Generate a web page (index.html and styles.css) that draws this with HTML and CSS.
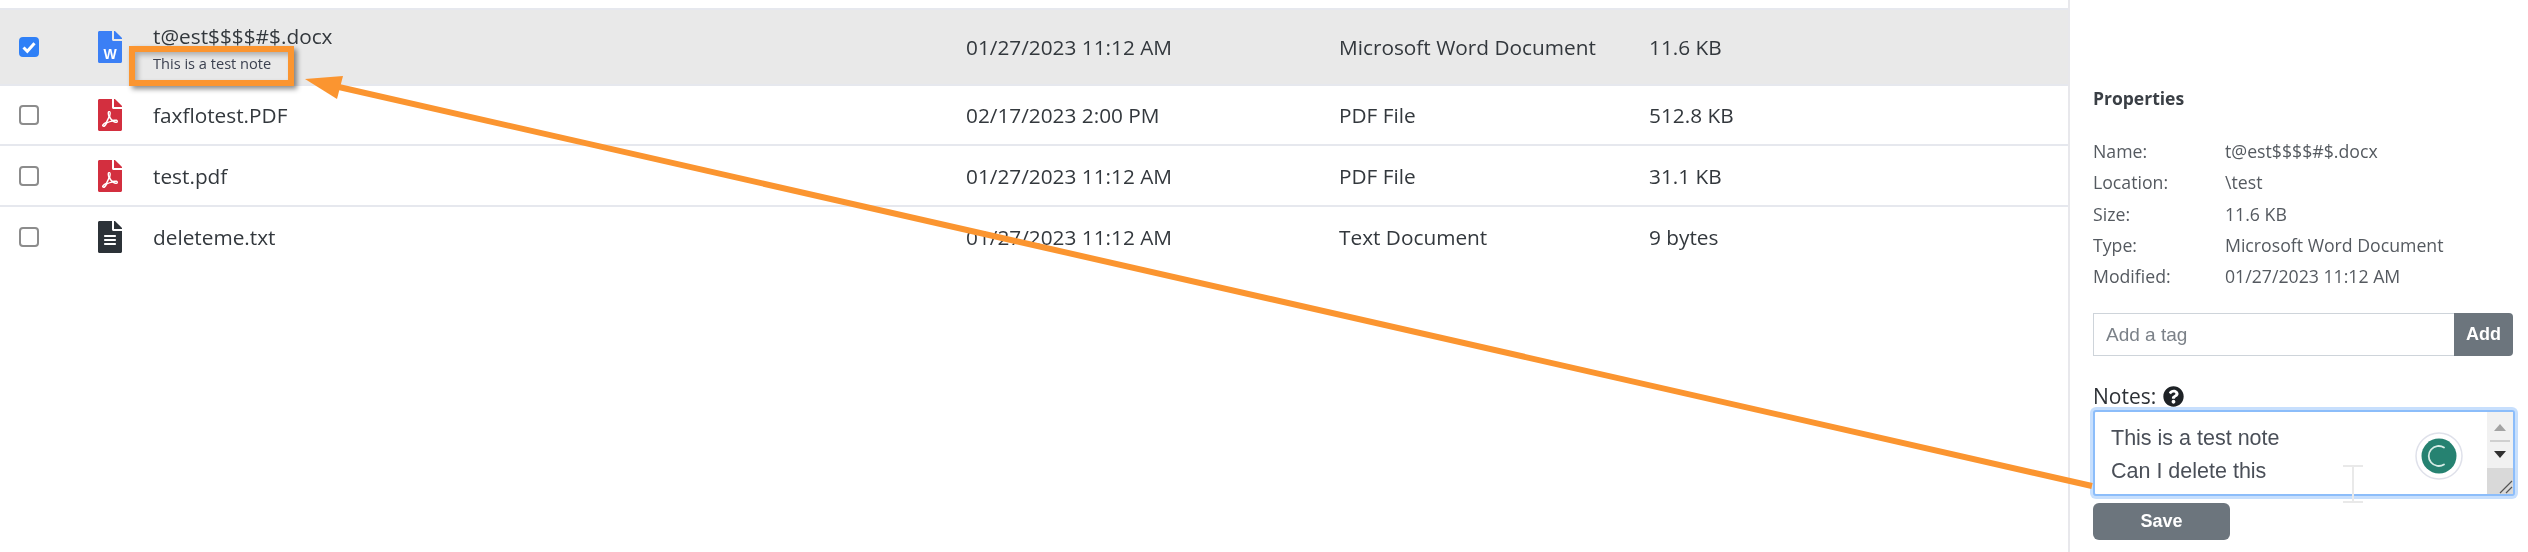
FILE: index.html
```html
<!DOCTYPE html>
<html lang="en">
<head>
<meta charset="utf-8">
<title>Files</title>
<link rel="stylesheet" href="styles.css">
</head>
<body>
<svg width="0" height="0" class="defs">
  <symbol id="pdf" viewBox="0 0 384 512"><path d="M181.9 256.1c-5-16-4.9-46.9-2-46.9 8.4 0 7.6 36.9 2 46.9zm-1.7 47.2c-7.7 20.2-17.3 43.3-28.4 62.7 18.3-7 39-17.2 62.9-21.9-12.7-9.6-24.9-23.4-34.5-40.8zM86.1 428.1c0 .8 13.2-5.4 34.9-40.2-6.7 6.3-29.1 24.5-34.9 40.2zM248 160h136v328c0 13.3-10.7 24-24 24H24c-13.3 0-24-10.7-24-24V24C0 10.7 10.7 0 24 0h200v136c0 13.2 10.8 24 24 24zm-8 171.8c-20-12.2-33.3-29-42.7-53.8 4.5-18.5 11.6-46.6 6.2-64.2-4.7-29.4-42.4-26.5-47.8-6.8-5 18.3-.4 44.1 8.1 77-11.6 27.6-28.7 64.6-40.8 85.8-.1 0-.1.1-.2.1-27.1 13.9-73.6 44.5-54.5 68 5.6 6.9 16 10 21.5 10 17.9 0 35.7-18 61.1-61.8 25.8-8.5 54.1-19.1 79-23.2 21.7 11.8 47.1 19.5 64 19.5 29.2 0 31.2-32 19.7-43.4-13.9-13.6-54.3-9.7-73.6-7.2zM377 105L279 7c-4.5-4.5-10.6-7-17-7h-6v128h128v-6.1c0-6.3-2.5-12.4-7-16.9zm-74.1 255.3c4.1-2.7-2.5-11.9-42.8-9 37.1 15.8 42.8 9 42.8 9z"/></symbol>
  <symbol id="txt" viewBox="0 0 384 512"><path d="M224 136V0H24C10.700 0 0 10.700 0 24v464c0 13.300 10.700 24 24 24h336c13.300 0 24-10.700 24-24V160H248c-13.200 0-24-10.800-24-24zm64 236c0 6.600-5.400 12-12 12H108c-6.600 0-12-5.400-12-12v-8c0-6.600 5.400-12 12-12h168c6.600 0 12 5.400 12 12v8zm0-64c0 6.600-5.400 12-12 12H108c-6.600 0-12-5.400-12-12v-8c0-6.600 5.400-12 12-12h168c6.600 0 12 5.400 12 12v8zm0-72v8c0 6.600-5.400 12-12 12H108c-6.600 0-12-5.400-12-12v-8c0-6.600 5.400-12 12-12h168c6.600 0 12 5.400 12 12zm96-114.100v6.100H256V0h6.100c6.400 0 12.500 2.500 17 7l97.900 98c4.500 4.500 7 10.600 7 16.900z"/></symbol>
  <symbol id="doc" viewBox="0 0 384 512"><path d="M224 136V0H24C10.700 0 0 10.700 0 24v464c0 13.300 10.700 24 24 24h336c13.300 0 24-10.700 24-24V160H248c-13.200 0-24-10.800-24-24zM384 121.900v6.100H256V0h6.100c6.400 0 12.500 2.500 17 7l97.900 98c4.500 4.500 7 10.600 7 16.900z"/></symbol>
</svg>

<div class="page">
  <main class="list">
    <div class="row row-selected">
      <span class="check check-on"><svg viewBox="0 0 20 20"><path d="M4.500 10.500l3.800 3.800 7.200-8" fill="none" stroke="#fff" stroke-width="3"/></svg></span>
      <span class="ficon ficon-doc"><svg><use href="#doc"/></svg><b class="w">W</b></span>
      <div class="name"><div>t@est$$$$#$.docx</div><div class="note">This is a test note</div></div>
      <div>01/27/2023 11:12 AM</div>
      <div>Microsoft Word Document</div>
      <div>11.6 KB</div>
    </div>
    <div class="row row-2">
      <span class="check"></span>
      <span class="ficon ficon-pdf"><svg><use href="#pdf"/></svg></span>
      <div class="name">faxflotest.PDF</div>
      <div>02/17/2023 2:00 PM</div>
      <div>PDF File</div>
      <div>512.8 KB</div>
    </div>
    <div class="row row-3">
      <span class="check"></span>
      <span class="ficon ficon-pdf"><svg><use href="#pdf"/></svg></span>
      <div class="name">test.pdf</div>
      <div>01/27/2023 11:12 AM</div>
      <div>PDF File</div>
      <div>31.1 KB</div>
    </div>
    <div class="row row-4">
      <span class="check"></span>
      <span class="ficon ficon-txt"><svg><use href="#txt"/></svg></span>
      <div class="name">deleteme.txt</div>
      <div>01/27/2023 11:12 AM</div>
      <div>Text Document</div>
      <div>9 bytes</div>
    </div>
  </main>

  <aside class="panel">
    <h2 class="title">Properties</h2>
    <dl class="props">
      <dt>Name:</dt><dd>t@est$$$$#$.docx</dd>
      <dt>Location:</dt><dd>\test</dd>
      <dt>Size:</dt><dd>11.6 KB</dd>
      <dt>Type:</dt><dd>Microsoft Word Document</dd>
      <dt>Modified:</dt><dd>01/27/2023 11:12 AM</dd>
    </dl>
    <div class="tag">
      <div class="tag-input">Add a tag</div>
      <div class="tag-btn">Add</div>
    </div>
    <div class="notes-label">Notes:
      <svg class="help" viewBox="0 0 512 512"><path d="M504 256c0 137-111 248-248 248S8 393 8 256 119 8 256 8s248 111 248 248zM262.700 90c-54.500 0-89.300 23-116.500 63.800-3.500 5.300-2.400 12.400 2.700 16.300l34.700 26.300c5.200 3.900 12.600 3 16.700-2.100 17.900-22.700 30.100-35.800 57.300-35.800 20.400 0 45.700 13.100 45.700 33 0 15-12.400 22.700-32.600 34-23.600 13.200-54.800 29.700-54.800 70.900V300c0 6.600 5.400 12 12 12h56c6.600 0 12-5.400 12-12v-1.300c0-28.500 83.400-29.700 83.400-106.900 0-58.200-60.300-101.800-116.600-101.800zM256 338c-25.400 0-46 20.600-46 46 0 25.400 20.600 46 46 46s46-20.600 46-46c0-25.400-20.600-46-46-46z"/></svg>
    </div>
    <div class="notes">
      <div class="notes-text">This is a test note<br>Can I delete this</div>
      <div class="scroll">
        <div class="scroll-track">
          <span class="arrow-up"></span>
          <span class="scroll-line"></span>
          <span class="arrow-down"></span>
        </div>
        <div class="scroll-thumb">
          <svg class="grip" viewBox="0 0 14 14"><path d="M1 13L13 1M7 13l6-6" stroke="#555" stroke-width="1.200" fill="none"/></svg>
        </div>
      </div>
      <span class="grammarly"><svg viewBox="0 0 48 48"><circle cx="24" cy="24" r="23" fill="#fff" stroke="#dfe1ea" stroke-width="1.500"/><circle cx="24" cy="24" r="17.500" fill="#268271"/><path d="M29 15.500a10 10 0 1 0 0 17" fill="none" stroke="#d7ece6" stroke-width="1.800" stroke-linecap="round"/></svg></span>
    </div>
    <div class="save">Save</div>
  </aside>
</div>

<svg class="ibeam" width="22" height="38" viewBox="0 0 22 38"><path d="M1 1h20M11 1v36M1 37h20" stroke="#e9e9e9" stroke-width="2" fill="none"/></svg>
<div class="callout"></div>
<svg class="arrow" width="2528" height="552" viewBox="0 0 2528 552">
  <path d="M2092 486L330 85" stroke="#fb9530" stroke-width="6" fill="none"/>
  <path d="M305 79L343 76L337 99Z" fill="#fb9530"/>
</svg>
</body>
</html>
```
FILE: styles.css
```css
html, body { margin: 0; padding: 0; background: #fff; }
body {
  width: 2528px;
  height: 552px;
  overflow: hidden;
  position: relative;
  font-family: "Open Sans", "Noto Sans", "Liberation Sans", sans-serif;
  color: #33383d;
}
.defs { position: absolute; }
.page { display: flex; height: 552px; filter: blur(0.4px); }

.list { width: 2068px; padding-top: 8px; box-sizing: border-box; flex: none; }
.row {
  display: grid;
  grid-template-columns: 79px 55px 813px 373px 310px 1fr;
  align-items: center;
  border-bottom: 2px solid #e6e8ee;
  box-sizing: border-box;
  font-size: 20.800px;
  padding-left: 19px;
}
.row-selected { height: 78px; background: #e9e9e9; border-top: 2px solid #e6e8ee; }
.row-2 { height: 60px; }
.row-3 { height: 61px; }
.row-4 { height: 60px; border-bottom: 0; }
.check {
  width: 20px;
  height: 20px;
  box-sizing: border-box;
  border: 2px solid #8c8c8c;
  border-radius: 4px;
  background: #fff;
  display: block;
}
.check-on { background: #2f80f7; border-color: #2f80f7; }
.check-on svg { display: block; width: 20px; height: 20px; margin: -2px; }
.ficon { position: relative; width: 24px; height: 32px; display: block; }
.ficon svg { width: 24px; height: 32px; display: block; }
.ficon-doc { fill: #3b7ff5; }
.ficon-pdf { fill: #d32f3f; }
.ficon-txt { fill: #2c3238; }
.w {
  position: absolute;
  left: 3px;
  top: 15px;
  width: 18px;
  text-align: center;
  font: 700 14px/16px "Liberation Sans", sans-serif;
  color: #fff;
}
.note {
  font-size: 14.600px;
  line-height: 18px;
  margin-top: 5px;
  color: #3c4150;
}
.name { line-height: 26px; }

.panel {
  flex: 1;
  border-left: 2px solid #e8e8ec;
  padding: 87px 14px 0 23px;
  box-sizing: border-box;
  min-width: 0;
}
.title {
  margin: 0;
  font-size: 17.500px;
  line-height: 22px;
  font-weight: 700;
  color: #3a3f45;
}
.props {
  display: grid;
  grid-template-columns: 132px 1fr;
  margin: 27px 0 0;
  font-size: 17.700px;
  line-height: 31.300px;
  color: #555a60;
}
.props dt, .props dd { margin: 0; }
.tag { display: flex; height: 43px; margin-top: 21px; width: 420px; }
.tag-input {
  flex: 1;
  border: 1px solid #ced4da;
  border-right: 0;
  padding-left: 12px;
  font: 400 19px/41px "Liberation Sans", Arial, sans-serif;
  color: #7b8188;
}
.tag-btn {
  width: 59px;
  background: #6c757d;
  color: #fff;
  font: 700 18px/43px "Liberation Sans", Arial, sans-serif;
  text-align: center;
  border-radius: 0 4px 4px 0;
}
.notes-label {
  margin-top: 28px;
  font-size: 21px;
  line-height: 24px;
  color: #2d3136;
  display: flex;
  align-items: center;
  gap: 7px;
}
.help { width: 21px; height: 21px; fill: #1e2226; }
.notes {
  position: relative;
  margin-top: 2px;
  width: 422px;
  height: 86px;
  box-sizing: border-box;
  border: 2px solid #8cbdfa;
  border-radius: 3px;
  box-shadow: 0 0 0 3px #c7dffd;
  background: #fff;
  display: flex;
  justify-content: space-between;
}
.notes-text {
  padding: 10px 0 0 16px;
  font: 400 21.500px/33px "Liberation Sans", Arial, sans-serif;
  color: #4a4f58;
}
.scroll { width: 26px; height: 100%; display: flex; flex-direction: column; background: #f1f1f1; }
.scroll-track {
  height: 56px;
  flex: none;
  display: flex;
  flex-direction: column;
  align-items: center;
  gap: 9px;
  padding-top: 12px;
  box-sizing: border-box;
}
.arrow-up { border: 6px solid transparent; border-top: 0; border-bottom: 7px solid #a3a3a3; }
.arrow-down { border: 6px solid transparent; border-bottom: 0; border-top: 7px solid #303030; }
.scroll-line { width: 20px; height: 2px; background: #cfcfcf; flex: none; }
.scroll-thumb { flex: 1; background: #d9d9d9; position: relative; }
.grip { position: absolute; right: 0; bottom: 0; width: 14px; height: 14px; }
.grammarly { position: absolute; right: 50px; top: 20px; width: 48px; height: 48px; }
.grammarly svg { display: block; width: 48px; height: 48px; }
.save {
  margin-top: 7px;
  width: 137px;
  height: 37px;
  background: #6c757d;
  color: #fff;
  border-radius: 6px;
  font: 700 18px/37px "Liberation Sans", Arial, sans-serif;
  text-align: center;
}

.ibeam { position: absolute; left: 2342px; top: 465px; }
.callout {
  position: absolute;
  left: 129px;
  top: 46px;
  width: 165px;
  height: 40px;
  box-sizing: border-box;
  border: 6px solid #fb9530;
  box-shadow: 3px 3px 5px rgba(0, 0, 0, 0.45), inset 3px 3px 5px rgba(0, 0, 0, 0.25);
}
.arrow { position: absolute; left: 0; top: 0; pointer-events: none; }
```
